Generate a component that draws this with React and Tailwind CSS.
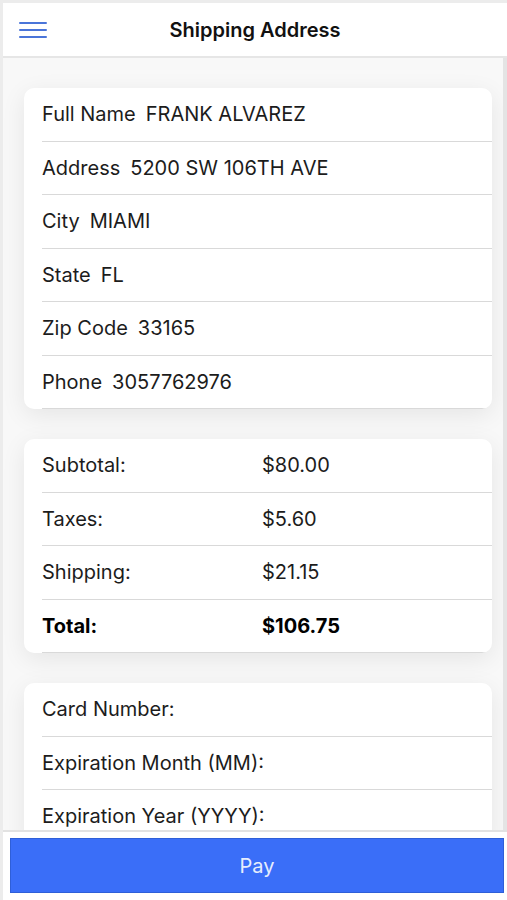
const font = { fontFamily: 'Inter, "Noto Sans", sans-serif' };

function Row({ children, bold }) {
  return (
    <div className={`ml-[18px] h-[53.5px] border-b border-[#d9d9d9] flex items-center text-[20px] ${bold ? 'font-bold text-black' : 'text-[#1c1c1c]'}`}>
      {children}
    </div>
  );
}

function Card({ children }) {
  return (
    <div className="shrink-0 bg-white rounded-[10px] shadow-[0_6px_24px_rgba(0,0,0,0.08)] overflow-hidden">
      {children}
    </div>
  );
}

export default function App() {
  const address = [
    ['Full Name', 'FRANK ALVAREZ'],
    ['Address', '5200 SW 106TH AVE'],
    ['City', 'MIAMI'],
    ['State', 'FL'],
    ['Zip Code', '33165'],
    ['Phone', '3057762976'],
  ];

  const totals = [
    ['Subtotal:', '$80.00'],
    ['Taxes:', '$5.60'],
    ['Shipping:', '$21.15'],
    ['Total:', '$106.75', true],
  ];

  const card = ['Card Number:', 'Expiration Month (MM):', 'Expiration Year (YYYY):'];

  return (
    <div className="h-[900px] w-full bg-[#ececec] pt-[3px] pl-[3px] flex flex-col overflow-hidden" style={font}>
      <header className="h-[55px] shrink-0 bg-white border-b-2 border-[#e6e6e6] flex items-center relative">
        <div className="ml-[16px] flex flex-col gap-[5px] w-[28px]">
          <span className="h-[2px] bg-[#4a75d9] rounded" />
          <span className="h-[2px] bg-[#4a75d9] rounded" />
          <span className="h-[2px] bg-[#4a75d9] rounded" />
        </div>
        <h1 className="absolute left-0 right-0 text-center text-[20px] font-semibold text-[#111]">
          Shipping Address
        </h1>
      </header>

      <main className="flex-1 min-h-0 flex overflow-hidden">
        <div className="flex-1 bg-[#f8f8f8] pl-[21px] pr-[11px] pt-[30px] flex flex-col gap-[30px]">
          <Card>
            {address.map(([label, value]) => (
              <Row key={label}>
                <span>{label}</span>
                <span className="ml-[10px]">{value}</span>
              </Row>
            ))}
          </Card>

          <Card>
            {totals.map(([label, value, bold]) => (
              <Row key={label} bold={bold}>
                <span className="w-[220px]">{label}</span>
                <span>{value}</span>
              </Row>
            ))}
          </Card>

          <Card>
            {card.map((label) => (
              <Row key={label}>{label}</Row>
            ))}
          </Card>
        </div>
        <div className="w-[4px] bg-[#e4e4e4]" />
      </main>

      <footer className="h-[70px] shrink-0 bg-white border-t-2 border-[#e2e2e2] pt-[6px] pl-[7px] pr-[3px]">
        <button className="w-full h-[55px] bg-[#3a6ef8] border border-[#2f5fd8] text-[#e6edfd] text-[20px]">
          Pay
        </button>
      </footer>
    </div>
  );
}
